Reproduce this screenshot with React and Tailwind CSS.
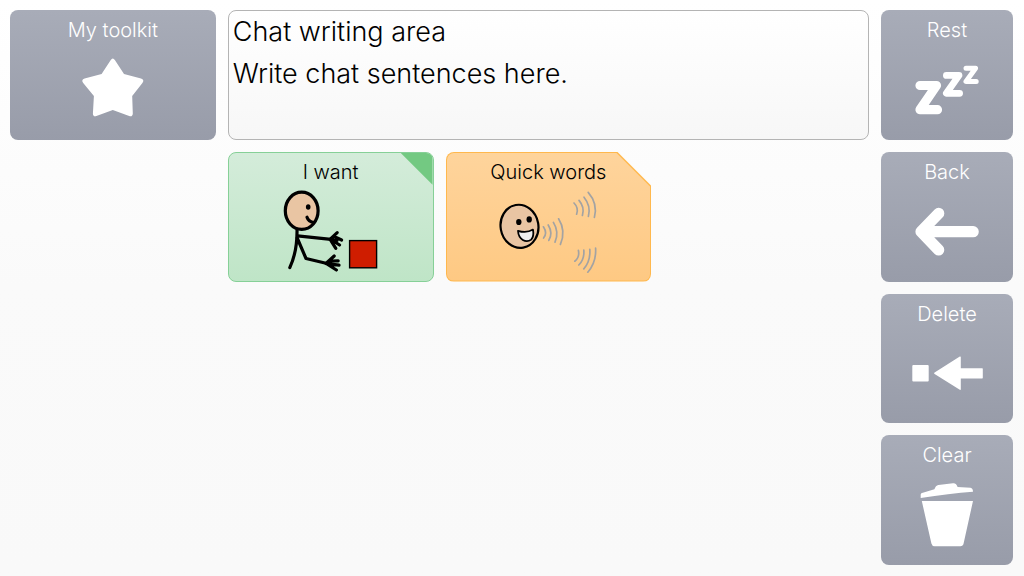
function TileLabel({ children }) {
  return <span className="text-xl leading-7 whitespace-nowrap">{children}</span>;
}

function Drawing({ width, children }) {
  return (
    <svg width={width} height="92" viewBox={`0 34 ${width} 92`} fill="none" aria-hidden="true" className="shrink-0">
      {children}
    </svg>
  );
}

function ActionTile({ label, width = 132, children }) {
  return (
    <button
      type="button"
      className="flex w-full flex-col items-center overflow-hidden rounded-lg bg-linear-to-b from-[#a8acb8] to-[#989ca9] pt-1.5 text-white"
    >
      <TileLabel>{label}</TileLabel>
      <Drawing width={width}>{children}</Drawing>
    </button>
  );
}

function Star() {
  return (
    <path
      d="M100.6 50.2Q102.8 46.6 105 50.2L114 64L131 68.6Q134.8 70 132.4 73L122.2 86L122.8 103.4Q122.6 107 119.2 106L102.8 100L86.4 106Q83 107 82.9 103.4L83.9 86L73.2 73Q70.8 70 74.6 68.6L91.6 64Z"
      fill="white"
    />
  );
}

function Snooze() {
  return (
    <g stroke="white" strokeLinecap="round" strokeLinejoin="round">
      <path d="M39 75.5H55.5L39 99.7H56.5" strokeWidth="9.2" />
      <path d="M65.4 65.4H78L65.4 83.3H78.6" strokeWidth="6.8" />
      <path d="M85 58.3H94.6L85 71.5H95.2" strokeWidth="5" />
    </g>
  );
}

function ArrowBack() {
  return (
    <path
      d="M57.7 61.4L40 79.7L57.7 98M41 79.7H92.2"
      stroke="white"
      strokeWidth="11.2"
      strokeLinecap="round"
      strokeLinejoin="round"
    />
  );
}

function Backspace() {
  return (
    <g fill="white">
      <rect x="31.3" y="71" width="16.4" height="16.4" rx="1" />
      <path d="M53.6 78.5L78.8 62.6Q79.8 62.2 79.8 63.2V74.2H101.2Q101.8 74.2 101.8 74.8V83.8Q101.8 84.4 101.2 84.4H79.8V95.2Q79.8 96.2 78.8 95.8L53.6 80.1Q52.4 79.3 53.6 78.5Z" />
    </g>
  );
}

function Bin() {
  return (
    <g fill="white">
      <path d="M39.7 63V59.4Q39.8 58.5 41 58L53.4 54.3Q54.6 50.6 57.4 50L72 48.2Q75.4 47.8 76.6 52L89.5 52.8Q92 53.2 92 56.8Q68 58.6 39.7 63Z" />
      <path d="M40.8 66H92L82.6 108.5Q82 111.3 79.4 111.3H53.6Q51.2 111.3 50.4 108.5Z" />
    </g>
  );
}

function Reaching() {
  return (
    <g stroke="black" strokeWidth="3.2" strokeLinecap="round" strokeLinejoin="round">
      <path d="M69 77Q69.5 99 61.8 115.6" />
      <path d="M69.5 83.8L103 87.3" />
      <path d="M69.2 86L78 106.5L99 111.5" />
      <path d="M102 87.3L109.2 80.6M102 87.3L106.5 84.6L113.6 88M103 87.5L111.6 93M102.5 88L107.8 96.4M102 87.3L109 88.5" />
      <path d="M98 111.5L106.2 104M98 111.5L104 109L110.2 108.8M99 111.7L111 113.2M99 112L108.4 118" />
      <ellipse cx="73.7" cy="58.8" rx="16.4" ry="18.6" fill="#e9c5a3" />
      <ellipse cx="80.2" cy="55" rx="2.3" ry="2.8" fill="black" stroke="none" />
      <path d="M79 65.2Q80.4 69.5 85.8 70.6" />
      <rect x="121.6" y="88.6" width="27" height="27.2" fill="#cf1d00" strokeWidth="1.4" strokeLinejoin="miter" />
    </g>
  );
}

function Talking() {
  return (
    <g strokeLinecap="round" strokeLinejoin="round">
      <ellipse
        cx="74.5"
        cy="74.3"
        rx="18.9"
        ry="21.6"
        transform="rotate(-10 74.5 74.3)"
        fill="#e9c5a3"
        stroke="black"
        strokeWidth="2.2"
      />
      <g fill="black">
        <ellipse cx="73.8" cy="70" rx="2.7" ry="3.1" />
        <ellipse cx="84.2" cy="67.4" rx="2.7" ry="3.1" />
      </g>
      <path
        d="M73 78.8Q81.5 81.6 88 77.6Q89.2 84.6 86.2 87.6C81 91.5 73.5 87.6 73 78.8Z"
        fill="#eeeeee"
        stroke="black"
        strokeWidth="1.8"
      />
      <g stroke="#a3a3a3" strokeWidth="1.7">
        <path d="M98.4 74.8Q102.6 81 98.6 86" />
        <path d="M103.2 73Q108.2 81 103.8 88.4" />
        <path d="M108.4 70.4Q114.4 80 110 90.2" />
        <path d="M113.6 66.8Q121.2 79 115.4 92.4" />
        <path d="M129 51Q134 56 131.6 62.2" />
        <path d="M134 48.4Q140 55.4 137.4 63.4" />
        <path d="M139 45.2Q146.2 54 143.4 64.4" />
        <path d="M143.2 40.4Q153 51.6 149.4 65.4" />
        <path d="M133.4 98.4Q134.8 105.4 129.8 109.2" />
        <path d="M138.8 98Q139.6 107.4 133.8 113" />
        <path d="M144.8 97.4Q145.6 109.4 138.8 116.8" />
        <path d="M150.6 96.2Q151.4 110.4 142.8 120.2" />
      </g>
    </g>
  );
}

export default function App() {
  return (
    <main className="grid min-h-screen grid-cols-[repeat(4,minmax(0,1fr))_132px] grid-rows-4 gap-3 bg-linear-to-b from-white via-[#fafafa] to-[#f9f9f9] pt-2.5 pr-[11px] pb-[11px] pl-2.5 font-['Inter','Lato',sans-serif] font-light text-black">
      <ActionTile label="My toolkit" width={206}>
        <Star />
      </ActionTile>

      <section className="col-span-3 flex flex-col overflow-hidden rounded-lg border border-[#b4b4b4] bg-linear-to-b from-white to-[#f7f7f7] px-1 text-[27px] leading-[42px]">
        <label htmlFor="chat" className="block">
          Chat writing area
        </label>
        <textarea
          id="chat"
          defaultValue="Write chat sentences here."
          className="block min-h-0 w-full flex-1 resize-none overflow-hidden bg-transparent outline-none"
        />
      </section>

      <ActionTile label="Rest">
        <Snooze />
      </ActionTile>

      <button
        type="button"
        className="relative col-start-2 flex flex-col items-center overflow-hidden rounded-lg border border-[#86d097] bg-linear-to-b from-[#d4ecda] to-[#bfe5c7] pt-[5px]"
      >
        <span className="absolute top-0 right-0 size-8 bg-[#73c982] [clip-path:polygon(0_0,100%_0,100%_100%)]" />
        <TileLabel>I want</TileLabel>
        <Drawing width={206}>
          <Reaching />
        </Drawing>
      </button>

      <button
        type="button"
        className="flex rounded-lg bg-[#ffb84d] p-px [clip-path:polygon(0_0,calc(100%-34px)_0,100%_34px,100%_100%,0_100%)]"
      >
        <span className="flex h-full w-full flex-col items-center overflow-hidden rounded-[7px] bg-linear-to-b from-[#fed49c] to-[#fec983] pt-[5px] [clip-path:polygon(0_0,calc(100%-34px)_0,100%_34px,100%_100%,0_100%)]">
          <TileLabel>Quick words</TileLabel>
          <Drawing width={206}>
            <Talking />
          </Drawing>
        </span>
      </button>

      <div className="col-start-5 row-span-3 row-start-2 grid grid-rows-3 gap-3">
        <ActionTile label="Back">
          <ArrowBack />
        </ActionTile>
        <ActionTile label="Delete">
          <Backspace />
        </ActionTile>
        <ActionTile label="Clear">
          <Bin />
        </ActionTile>
      </div>
    </main>
  );
}
